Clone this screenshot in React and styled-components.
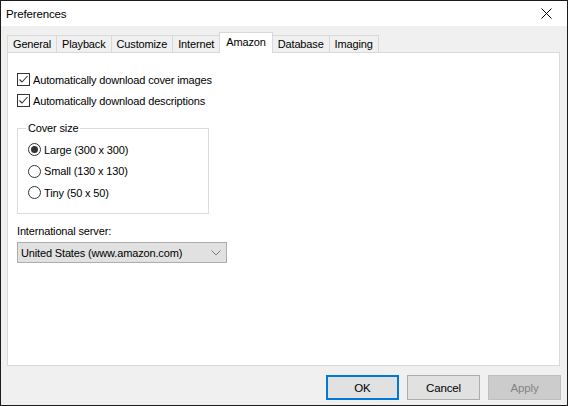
import React from 'react';
import styled, { createGlobalStyle } from 'styled-components';

const GlobalStyle = createGlobalStyle`
  html, body {
    margin: 0;
    padding: 0;
    background: #f0f0f0;
  }
  * {
    box-sizing: border-box;
  }
`;

const Window = styled.div`
  width: 568px;
  height: 406px;
  display: flex;
  flex-direction: column;
  border: 1px solid #1c1c1c;
  background: #f0f0f0;
  font-family: "Liberation Sans", Arial, sans-serif;
  font-size: 11px;
  letter-spacing: -0.15px;
  color: #000;
`;

const TitleBar = styled.div`
  height: 25px;
  display: flex;
  align-items: center;
  justify-content: space-between;
  background: #fff;
  padding-left: 5px;
  font-size: 11.5px;
`;

const CloseButton = styled.div`
  width: 46px;
  height: 25px;
  display: flex;
  align-items: center;
  justify-content: center;
  margin-right: -2px;
`;

const Body = styled.div`
  flex: 1;
  display: flex;
  flex-direction: column;
  padding: 7px 7px 0 6px;
`;

const TabStrip = styled.div`
  display: flex;
  align-items: flex-end;
  height: 20px;
  position: relative;
  z-index: 1;
`;

const Tab = styled.div`
  height: ${p => (p.$active ? '21px' : '18px')};
  padding: 0 ${p => (p.$active ? '6px' : '5px')};
  margin-left: -1px;
  display: flex;
  align-items: center;
  border: 1px solid #d9d9d9;
  border-bottom: ${p => (p.$active ? 'none' : '1px solid #d9d9d9')};
  background: ${p => (p.$active ? '#fff' : '#f0f0f0')};
  white-space: nowrap;
  padding-bottom: ${p => (p.$active ? '2px' : '0')};

  &:first-child {
    margin-left: 0;
  }
`;

const Panel = styled.div`
  height: 314px;
  margin-top: -1px;
  background: #fff;
  border: 1px solid #d9d9d9;
  padding: 16px 9px 0 9px;
  display: flex;
  flex-direction: column;
  align-items: flex-start;
`;

const CheckRow = styled.label`
  display: flex;
  align-items: center;
  height: 21px;
  gap: 3px;
`;

const CheckBox = styled.span`
  width: 13px;
  height: 13px;
  border: 1px solid #333;
  background: #fff;
  display: flex;
  align-items: center;
  justify-content: center;
`;

const GroupBox = styled.fieldset`
  margin: 10px 0 0 0;
  width: 192px;
  height: 93px;
  border: 1px solid #dcdcdc;
  padding: 4px 0 0 10px;
  display: flex;
  flex-direction: column;
`;

const Legend = styled.legend`
  padding: 0 2px;
  margin-left: -2px;
  line-height: 14px;
`;

const RadioRow = styled.label`
  display: flex;
  align-items: center;
  height: 21.5px;
  gap: 3px;
`;

const RadioCircle = styled.span`
  width: 13px;
  height: 13px;
  border-radius: 50%;
  border: 1px solid #333;
  background: #fff;
  display: flex;
  align-items: center;
  justify-content: center;

  &::after {
    content: '';
    display: ${p => (p.$checked ? 'block' : 'none')};
    width: 7px;
    height: 7px;
    border-radius: 50%;
    background: #333;
  }
`;

const FieldLabel = styled.div`
  margin-top: 10px;
  line-height: 14px;
`;

const Select = styled.div`
  margin-top: 4px;
  width: 210px;
  height: 21px;
  border: 1px solid #adadad;
  background: #e1e1e1;
  display: flex;
  align-items: center;
  justify-content: space-between;
  padding: 0 5px 0 3px;
`;

const Footer = styled.div`
  flex: 1;
  display: flex;
  justify-content: flex-end;
  align-items: flex-start;
  gap: 8px;
  padding: 9px 0 0 0;
  margin-right: -1px;
`;

const Button = styled.div`
  width: 73px;
  height: 25px;
  display: flex;
  align-items: center;
  justify-content: center;
  font-size: 11.5px;
  background: ${p => (p.$disabled ? '#cccccc' : '#e1e1e1')};
  border: ${p => (p.$default ? '2px solid #0078d7' : p.$disabled ? '1px solid #bfbfbf' : '1px solid #adadad')};
  color: ${p => (p.$disabled ? '#838383' : '#000')};
`;

const tabs = ['General', 'Playback', 'Customize', 'Internet', 'Amazon', 'Database', 'Imaging'];

const Check = () => (
  <svg width="11" height="11" viewBox="0 0 11 11">
    <path d="M1.5 5.5 L4 8 L9.5 2" fill="none" stroke="#333" strokeWidth="1.1" />
  </svg>
);

const Chevron = () => (
  <svg width="10" height="6" viewBox="0 0 10 6">
    <path d="M0.5 0.5 L5 5 L9.5 0.5" fill="none" stroke="#7a7a7a" strokeWidth="1" />
  </svg>
);

const App = () => {
  return (
    <>
      <GlobalStyle />
      <Window>
        <TitleBar>
          Preferences
          <CloseButton>
            <svg width="11" height="11" viewBox="0 0 11 11">
              <path d="M0.5 0.5 L10.5 10.5 M10.5 0.5 L0.5 10.5" stroke="#000" strokeWidth="1" />
            </svg>
          </CloseButton>
        </TitleBar>
        <Body>
          <TabStrip>
            {tabs.map(t => (
              <Tab key={t} $active={t === 'Amazon'}>{t}</Tab>
            ))}
          </TabStrip>
          <Panel>
            <CheckRow><CheckBox><Check /></CheckBox>Automatically download cover images</CheckRow>
            <CheckRow><CheckBox><Check /></CheckBox>Automatically download descriptions</CheckRow>
            <GroupBox>
              <Legend>Cover size</Legend>
              <RadioRow><RadioCircle $checked />Large (300 x 300)</RadioRow>
              <RadioRow><RadioCircle />Small (130 x 130)</RadioRow>
              <RadioRow><RadioCircle />Tiny (50 x 50)</RadioRow>
            </GroupBox>
            <FieldLabel>International server:</FieldLabel>
            <Select>
              United States (www.amazon.com)
              <Chevron />
            </Select>
          </Panel>
          <Footer>
            <Button $default>OK</Button>
            <Button>Cancel</Button>
            <Button $disabled>Apply</Button>
          </Footer>
        </Body>
      </Window>
    </>
  );
};

export default App;
